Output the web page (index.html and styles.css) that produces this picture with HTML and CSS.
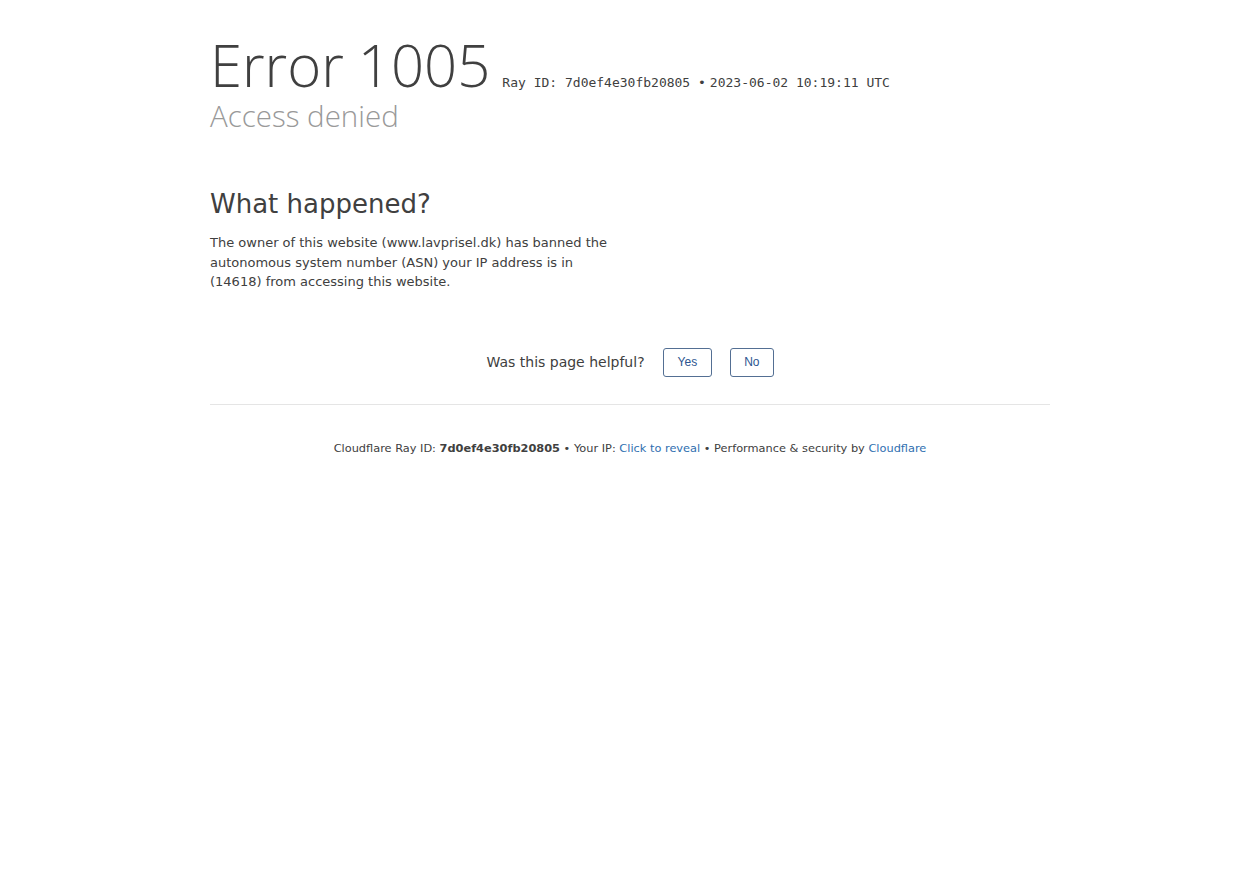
FILE: index.html
```html
<!DOCTYPE html>
<html lang="en">
<head>
<meta charset="utf-8">
<title>Access denied | www.lavprisel.dk used Cloudflare to restrict access</title>
<link rel="stylesheet" href="styles.css">
</head>
<body>
<div class="wrapper">
  <header class="header">
    <h1 class="title"><span class="err-type">Error</span> <span class="err-code">1005</span> <small class="ray">Ray ID: 7d0ef4e30fb20805 &bull;</small><small class="ray">2023-06-02 10:19:11 UTC</small></h1>
    <h2 class="subheadline">Access denied</h2>
  </header>
  <section class="section">
    <div class="column">
      <h2 class="section-title">What happened?</h2>
      <p class="text">The owner of this website (www.lavprisel.dk) has banned the autonomous system number (ASN) your IP address is in (14618) from accessing this website.</p>
    </div>
  </section>
  <div class="feedback">
    <span class="feedback-q">Was this page helpful?</span>
    <button class="fb-btn fb-yes" type="button">Yes</button>
    <button class="fb-btn" type="button">No</button>
  </div>
  <footer class="footer">
    <p class="footer-line">Cloudflare Ray ID: <strong>7d0ef4e30fb20805</strong> &bull; Your IP: <a href="#" class="link">Click to reveal</a> &bull; Performance &amp; security by <a href="#" class="link">Cloudflare</a></p>
  </footer>
</div>
</body>
</html>
```

FILE: styles.css
```css
html, body {
  margin: 0;
  padding: 0;
  background: #fff;
}
body {
  font-family: "DejaVu Sans", sans-serif;
  color: #404040;
  font-size: 13px;
}
.wrapper {
  width: 840px;
  margin: 0 auto;
}
.header {
  padding-top: 32px;
}
.title {
  margin: 0;
  font-family: "Open Sans", sans-serif;
  font-weight: 300;
  font-size: 58px;
  line-height: 66px;
  color: #404040;
  white-space: nowrap;
}
.err-code {
  margin-left: -1px;
}
.ray {
  font-family: "DejaVu Sans Mono", monospace;
  font-size: 13px;
  line-height: 1;
  font-weight: 400;
  color: #404040;
  margin-left: -3px;
}
.ray + .ray {
  margin-left: 4px;
}
.subheadline {
  margin: 0;
  font-family: "Open Sans", sans-serif;
  font-weight: 300;
  font-size: 29.5px;
  line-height: 36px;
  color: #999;
}
.section {
  margin-top: 55px;
}
.column {
  width: 410px;
}
.section-title {
  margin: 0;
  font-size: 26px;
  font-weight: 400;
  line-height: 31.2px;
  color: #404040;
}
.text {
  margin: 13px 0 0;
  font-size: 13px;
  line-height: 19.5px;
  color: #404040;
}
.feedback {
  margin-top: 56px;
  display: flex;
  justify-content: center;
  align-items: center;
  gap: 18px;
  padding-bottom: 27px;
  border-bottom: 1px solid #e5e5e5;
}
.feedback-q {
  font-size: 14px;
  color: #404040;
}
.fb-btn {
  font-family: "Liberation Sans", Arial, sans-serif;
  font-size: 12px;
  line-height: 17px;
  padding: 5px 13px;
  color: #2c5590;
  background: #fff;
  border: 1px solid #536f93;
  border-radius: 3px;
  cursor: pointer;
}
.fb-yes {
  padding: 5px 14px;
}
.footer {
  padding-top: 34px;
}
.footer-line {
  margin: 0;
  text-align: center;
  font-size: 11.35px;
  line-height: 18px;
  color: #404040;
}
.footer-line strong {
  font-weight: 700;
}
.link {
  color: #2f6fb0;
  text-decoration: none;
}
```
